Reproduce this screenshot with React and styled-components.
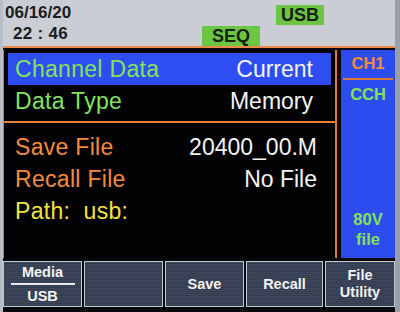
import styled, { createGlobalStyle } from 'styled-components';

const Global = createGlobalStyle`
  html, body { margin: 0; padding: 0; background: #111; }
  #root { width: 400px; height: 312px; overflow: hidden; }
`;

const Screen = styled.div`
  width: 400px;
  height: 312px;
  display: flex;
  flex-direction: column;
  background: #0a0a0c;
  font-family: "Liberation Sans", Arial, sans-serif;
  box-sizing: border-box;
  border-left: 3px solid #b8bcc4;
  border-right: 5px solid #9aa0aa;
`;

const StatusBar = styled.header`
  height: 46px;
  background: #cacdd3;
  display: flex;
  padding-left: 2px;
  border-bottom: 2px solid #e88a4a;
`;

const Clock = styled.div`
  width: 197px;
  display: flex;
  flex-direction: column;
  color: #1c1c22;
  font-weight: bold;
  font-size: 17px;
  line-height: 21px;
  padding-top: 2px;

  .time { padding-left: 8px; letter-spacing: 0.3px; }
`;

const Tag = styled.div`
  background: #6cc644;
  color: #16200f;
  font-weight: bold;
  font-size: 18px;
  width: ${p => p.$w}px;
  height: 20px;
  line-height: 21px;
  text-align: center;
  align-self: ${p => p.$top ? 'flex-start' : 'flex-end'};
  margin-top: ${p => p.$top ? 5 : 0}px;
  margin-left: ${p => p.$ml}px;
`;

const Body = styled.div`
  flex: 1;
  display: flex;
  gap: 4px;
  padding-top: 2px;
`;

const MainPanel = styled.section`
  width: 331px;
  border-left: 1px solid #e0783a;
  border-right: 2px solid #e0783a;
  display: flex;
  flex-direction: column;
  background: #030305;
`;

const Group = styled.div`
  display: flex;
  flex-direction: column;
  padding: ${p => p.$pad};
  border-bottom: ${p => p.$line ? '2px solid #e8803c' : 'none'};
`;

const Row = styled.div`
  display: flex;
  justify-content: space-between;
  align-items: center;
  height: ${p => p.$h || 32}px;
  padding: 0 ${p => p.$pr || 18}px 0 7px;
  background: ${p => p.$active ? '#2e4ef2' : 'transparent'};
  font-size: 23px;
  letter-spacing: 0.3px;
  color: ${p => p.$color};

  .value { color: #f4f4f4; letter-spacing: 0; }
`;

const SidePanel = styled.aside`
  flex: 1;
  background: #2d4cf0;
  display: flex;
  flex-direction: column;
  align-items: center;
  font-weight: bold;
  font-size: 16.5px;
  line-height: 20px;
  padding: 3px 0 9px;
`;

const SideLabel = styled.div`
  color: ${p => p.$color};
  width: 100%;
  text-align: center;
`;

const Divider = styled.div`
  width: 50px;
  height: 2px;
  background: #e0783a;
  margin: 5px 0 4px;
`;

const Spacer = styled.div`
  flex: 1;
`;

const Buttons = styled.nav`
  height: 46px;
  margin: 3px 0 5px;
  display: grid;
  grid-template-columns: 79px 79px 79px 77px 1fr;
  gap: 2px;
  background: #0a0a0c;
`;

const SoftKey = styled.div`
  border: 1px solid #c4c8d0;
  background: repeating-linear-gradient(#3e475c 0 1px, #343c50 1px 2px);
  color: #f2f2f2;
  font-weight: bold;
  font-size: 14.5px;
  line-height: 17px;
  display: flex;
  flex-direction: column;
  align-items: center;
  justify-content: center;
  text-align: center;
`;

const KeyLine = styled.div`
  width: 64px;
  height: 2px;
  background: #e8e8ec;
  margin: 2px 0 3px;
`;

export default function App() {
  return (
    <Screen>
      <Global />
      <StatusBar>
        <Clock>
          <span>06/16/20</span>
          <span className="time">22 : 46</span>
        </Clock>
        <Tag $w={58} $ml={0}>SEQ</Tag>
        <Tag $w={48} $top $ml={16}>USB</Tag>
      </StatusBar>
      <Body>
        <MainPanel>
          <Group $pad="3px 4px 3px 4px" $line>
            <Row $active $color="#82e25a">
              <span>Channel Data</span>
              <span className="value">Current</span>
            </Row>
            <Row $color="#82e25a" $h={33}>
              <span>Data Type</span>
              <span className="value">Memory</span>
            </Row>
          </Group>
          <Group $pad="8px 4px 0 4px">
            <Row $color="#f58a3a" $pr={14}>
              <span>Save File</span>
              <span className="value">20400_00.M</span>
            </Row>
            <Row $color="#f58a3a" $pr={14}>
              <span>Recall File</span>
              <span className="value">No File</span>
            </Row>
            <Row $color="#f2e23c">
              <span>Path:&nbsp; usb:</span>
            </Row>
          </Group>
        </MainPanel>
        <SidePanel>
          <SideLabel $color="#f58a3a">CH1</SideLabel>
          <Divider />
          <SideLabel $color="#82e25a">CCH</SideLabel>
          <Spacer />
          <SideLabel $color="#82e25a">80V</SideLabel>
          <SideLabel $color="#82e25a">file</SideLabel>
        </SidePanel>
      </Body>
      <Buttons>
        <SoftKey>
          <span>Media</span>
          <KeyLine />
          <span>USB</span>
        </SoftKey>
        <SoftKey />
        <SoftKey>Save</SoftKey>
        <SoftKey>Recall</SoftKey>
        <SoftKey>
          <span>File</span>
          <span>Utility</span>
        </SoftKey>
      </Buttons>
    </Screen>
  );
}
